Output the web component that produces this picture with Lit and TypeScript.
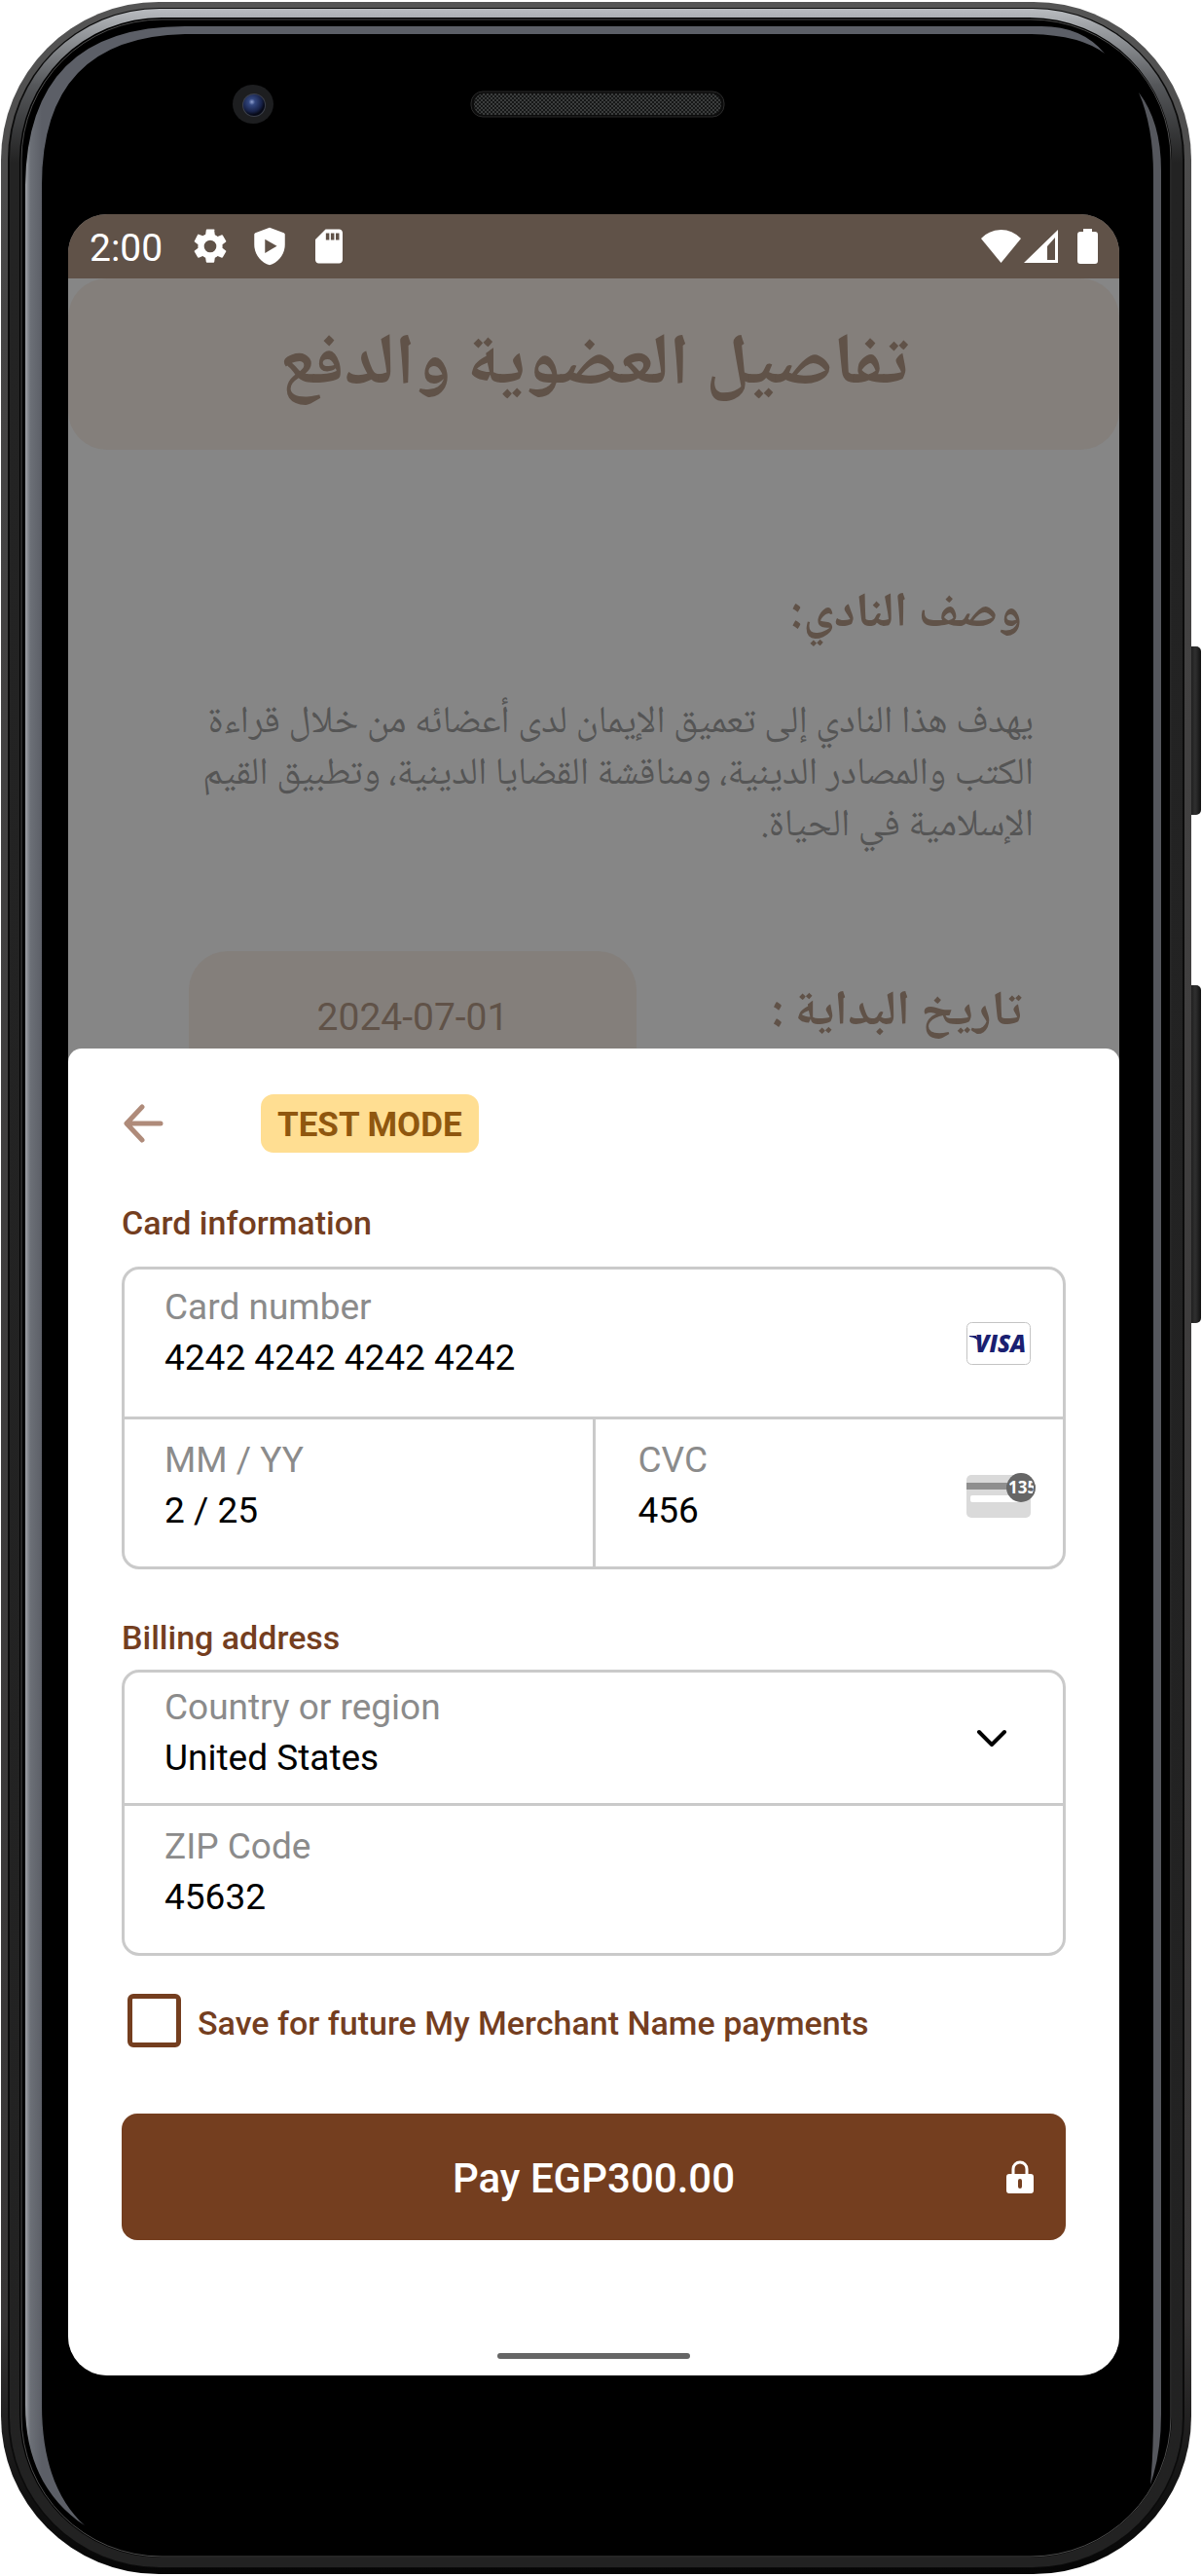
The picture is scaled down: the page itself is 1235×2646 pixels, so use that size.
import { LitElement, html, css, svg } from "lit";
import { customElement, property, state } from "lit/decorators.js";

/** Handset body: metal rim, glass edge highlights, camera, speaker and side keys. */
@customElement("device-frame")
class DeviceFrame extends LitElement {
  static styles = css`
    :host {
      display: block;
    }
    .art {
      display: block;
      width: 100%;
      height: 100%;
    }
  `;

  render() {
    return html`
      <svg class="art" viewBox="0 0 1235 2646" preserveAspectRatio="none" aria-hidden="true">
        <defs>
          <linearGradient id="rim" x1="0" y1="0" x2="0" y2="1">
            <stop offset="0" stop-color="#555555" />
            <stop offset="0.12" stop-color="#454444" />
            <stop offset="0.9" stop-color="#383636" />
            <stop offset="0.97" stop-color="#111111" />
            <stop offset="1" stop-color="#050505" />
          </linearGradient>
          <linearGradient id="metal" x1="0" y1="0" x2="0" y2="1">
            <stop offset="0" stop-color="#b9bcc0" />
            <stop offset="0.008" stop-color="#9b9ea2" />
            <stop offset="0.03" stop-color="#55575a" />
            <stop offset="0.06" stop-color="#232323" />
            <stop offset="1" stop-color="#222222" />
          </linearGradient>
          <linearGradient id="edge" gradientUnits="userSpaceOnUse" x1="26" y1="0" x2="43" y2="0">
            <stop offset="0" stop-color="#a0a3a8" />
            <stop offset="0.3" stop-color="#6c7077" />
            <stop offset="1" stop-color="#5c5f67" />
          </linearGradient>
          <linearGradient id="key" x1="0" y1="0" x2="1" y2="0">
            <stop offset="0" stop-color="#0a0a0a" />
            <stop offset="0.6" stop-color="#303030" />
            <stop offset="1" stop-color="#111111" />
          </linearGradient>
          <radialGradient id="lens" cx="0.4" cy="0.35" r="0.6">
            <stop offset="0" stop-color="#8fa0d0" />
            <stop offset="0.25" stop-color="#33477f" />
            <stop offset="0.75" stop-color="#18234a" />
            <stop offset="1" stop-color="#070a18" />
          </radialGradient>
          <pattern id="mesh" width="4" height="4" patternUnits="userSpaceOnUse">
            <rect width="4" height="4" fill="#161717" />
            <circle cx="1" cy="1" r="1" fill="#474949" />
            <circle cx="3" cy="3" r="1" fill="#474949" />
          </pattern>
        </defs>
        <rect x="1219" y="664" width="15" height="173" rx="5" fill="url(#key)" />
        <rect x="1219" y="1012" width="15" height="347" rx="5" fill="url(#key)" />
        <rect x="1" y="2" width="1223" height="2642" rx="162" fill="url(#rim)" />
        <rect x="8" y="8" width="1209" height="2630" rx="156" fill="#0b0b0b" />
        <rect x="10" y="9" width="1205" height="2628" rx="154" fill="url(#metal)" />
        <rect x="20" y="18" width="1184" height="2609" rx="146" fill="#000000" />
        <rect x="22" y="20" width="1181" height="2606" rx="144" fill="none" stroke="#4c4c4c" stroke-width="1" />
        <path
          fill="url(#edge)"
          d="M26 2470 V190 Q28 27 190 27 H1070 Q1112 27 1135 55 Q1110 36 1060 35 H190 Q43 38 43 190 V2470 C43 2530 60 2570 87 2594 C50 2570 26 2530 26 2470 Z"
        />
        <path fill="#55575d" d="M1170 95 Q1193 125 1193 175 V2480 Q1193 2520 1182 2552 Q1185 2520 1185 2480 V180 Q1185 130 1170 95 Z" />
        <ellipse cx="260" cy="107" rx="21" ry="20" fill="#1d1e20" />
        <ellipse cx="261" cy="108" rx="12" ry="12" fill="#3b3f4a" />
        <ellipse cx="261" cy="108" rx="11" ry="11" fill="url(#lens)" />
        <rect x="484" y="94" width="260" height="26" rx="12" fill="#0c0c0c" stroke="#2b2b2b" stroke-width="1" />
        <rect x="487" y="96" width="254" height="22" rx="10" fill="url(#mesh)" />
      </svg>
    `;
  }
}

const settingsIcon = svg`<path fill="currentColor" d="M19.14 12.94c.04-.3.06-.61.06-.94 0-.32-.02-.64-.07-.94l2.03-1.58a.49.49 0 0 0 .12-.61l-1.92-3.32a.49.49 0 0 0-.59-.22l-2.39.96c-.5-.38-1.03-.7-1.62-.94l-.36-2.54A.48.48 0 0 0 13.92 2h-3.84c-.24 0-.43.17-.47.41l-.36 2.54c-.59.24-1.13.57-1.62.94l-2.39-.96a.48.48 0 0 0-.59.22L2.74 8.87a.48.48 0 0 0 .12.61l2.03 1.58c-.05.3-.09.63-.09.94s.02.64.07.94l-2.03 1.58a.49.49 0 0 0-.12.61l1.92 3.32c.12.22.37.29.59.22l2.39-.96c.5.38 1.03.7 1.62.94l.36 2.54c.05.24.24.41.48.41h3.84c.24 0 .44-.17.47-.41l.36-2.54c.59-.24 1.13-.56 1.62-.94l2.39.96c.22.08.47 0 .59-.22l1.92-3.32a.48.48 0 0 0-.12-.61zM12 15.6a3.6 3.6 0 1 1 0-7.2 3.6 3.6 0 0 1 0 7.2z"/>`;
const protectIcon = svg`<path fill="currentColor" fill-rule="evenodd" d="M12 1 3.6 4.1Q3 4.4 3 5v6c0 5.5 3.8 10.700 9 12 5.200-1.300 9-6.500 9-12V5q0-.6-.6-.9zM9.300 7.800v8.200l7-4.200z"/>`;
const cardIcon = svg`<path fill="currentColor" fill-rule="evenodd" d="M18 2h-8L4 8v12c0 1.100.9 2 2 2h12c1.100 0 2-.9 2-2V4c0-1.100-.9-2-2-2zM10.200 4.300h2v4h-2zM13.100 4.300h2v4h-2zM16 4.300h2v4h-2z"/>`;

@customElement("status-bar")
class StatusBar extends LitElement {
  static styles = css`
    :host {
      display: flex;
      align-items: center;
      height: 66px;
      padding: 0 22px;
      background: #605248;
      color: #ffffff;
      font-family: Roboto, sans-serif;
    }
    .clock {
      font-size: 39px;
      line-height: 48px;
      margin-right: 28px;
      padding-top: 3px;
    }
    .left {
      display: flex;
      gap: 19px;
    }
    .right {
      display: flex;
      align-items: center;
      margin-left: auto;
    }
    .wifi {
      margin-right: 3px;
    }
    .signal {
      margin-right: 20px;
    }
  `;

  render() {
    return html`
      <span class="clock">2:00</span>
      <span class="left">
        ${[settingsIcon, protectIcon, cardIcon].map(
          (icon) => html`<svg width="42" height="42" viewBox="0 0 24 24" aria-hidden="true">${icon}</svg>`
        )}
      </span>
      <span class="right">
        <svg class="wifi" width="41" height="34" viewBox="0 0 41 34" aria-hidden="true">
          <path fill="currentColor" d="M0 9 Q9 0 20.500 0 T41 9 L20.500 34 Z" />
        </svg>
        <svg class="signal" width="35" height="34" viewBox="0 0 35 34" aria-hidden="true">
          <path fill="currentColor" fill-rule="evenodd" d="M35 0 V34 H0 Z M32 8 L24 17 V31 H32 Z" />
        </svg>
        <svg width="21" height="36" viewBox="0 0 21 36" aria-hidden="true">
          <path fill="currentColor" d="M6 0 H15 V3 H18 Q21 3 21 6 V33 Q21 36 18 36 H3 Q0 36 0 33 V6 Q0 3 3 3 H6 Z" />
        </svg>
      </span>
    `;
  }
}

/** Membership page that sits dimmed behind the payment sheet. */
@customElement("membership-page")
class MembershipPage extends LitElement {
  static styles = css`
    :host {
      display: block;
      color: #605248;
      font-family: "Noto Naskh Arabic", "Noto Sans Arabic", "DejaVu Sans", sans-serif;
    }
    .title {
      display: flex;
      align-items: center;
      justify-content: center;
      box-sizing: border-box;
      height: 176px;
      margin: 0;
      padding-top: 8px;
      border-radius: 40px;
      background: #847f7b;
      font-size: 74px;
      line-height: 80px;
      font-weight: 700;
    }
    .body {
      padding: 141px 100px 0 124px;
    }
    .heading {
      margin: 0;
      font-size: 50px;
      line-height: 60px;
      font-weight: 700;
    }
    .about .heading {
      margin: 0 0 54px;
    }
    .text {
      margin: 0 -12px 0 0;
      color: #555555;
      font-size: 39px;
      line-height: 53px;
      white-space: nowrap;
    }
    .start {
      display: flex;
      align-items: flex-start;
      justify-content: space-between;
      margin-top: 101px;
    }
    .start .heading {
      padding-top: 35px;
    }
    .date {
      width: 460px;
      height: 154px;
      box-sizing: border-box;
      border-radius: 40px;
      background: #847f7b;
      font-family: Roboto, sans-serif;
      font-size: 39px;
      line-height: 136px;
      text-align: center;
    }
  `;

  render() {
    return html`
      <div dir="rtl" lang="ar">
        <h1 class="title">تفاصيل العضوية والدفع</h1>
        <div class="body">
          <section class="about">
            <h2 class="heading">وصف النادي:</h2>
            <p class="text">
              يهدف هذا النادي إلى تعميق الإيمان لدى أعضائه من خلال قراءة<br />
              الكتب والمصادر الدينية، ومناقشة القضايا الدينية، وتطبيق القيم<br />
              الإسلامية في الحياة.
            </p>
          </section>
          <section class="start">
            <h2 class="heading">تاريخ البداية :</h2>
            <time class="date" dir="ltr" datetime="2024-07-01">2024-07-01</time>
          </section>
        </div>
      </div>
    `;
  }
}

@customElement("payment-sheet")
class PaymentSheet extends LitElement {
  @property() amount = "EGP300.00";
  @property() merchant = "My Merchant Name";
  @state() private save = false;

  static styles = css`
    :host {
      display: block;
      padding: 47px 55px 17px;
      border-radius: 14px 14px 0 0;
      background: #ffffff;
      color: #000000;
      font-family: Roboto, sans-serif;
    }
    .top {
      display: flex;
      align-items: center;
      gap: 100px;
      padding-left: 1px;
    }
    .back {
      display: flex;
      padding: 0;
      border: 0;
      background: none;
      color: #af8b7a;
    }
    .mode {
      padding: 10px 17px 6px;
      border-radius: 13px;
      background: #ffde92;
      color: #8f570f;
      font-size: 35px;
      line-height: 44px;
      font-weight: 700;
    }
    .legend {
      color: #743e1f;
      font-size: 34px;
      line-height: 44px;
      font-weight: 500;
    }
    .card {
      margin-top: 50px;
    }
    .billing {
      margin-top: 48px;
    }
    .box {
      display: grid;
      gap: 3px;
      border: 3px solid #cacaca;
      border-radius: 18px;
      background: #cacaca;
      overflow: hidden;
    }
    .card .box {
      grid-template-columns: 1fr 1fr;
      margin-top: 23px;
    }
    .billing .box {
      margin-top: 11px;
    }
    .cell {
      display: flex;
      align-items: center;
      box-sizing: border-box;
      min-width: 0;
      padding: 0 33px 0 41px;
      background: #ffffff;
    }
    .wide {
      grid-column: 1 / -1;
    }
    .code {
      padding-left: 44px;
      padding-right: 28px;
    }
    .country {
      padding-right: 57px;
    }
    .field {
      display: flex;
      flex: 1;
      flex-direction: column;
      min-width: 0;
      padding: 16px 0 31px;
    }
    .wide .field {
      padding: 13px 0 34px;
    }
    .country .field {
      padding: 10px 0 20px;
    }
    .label,
    .input {
      font-size: 37px;
      line-height: 52px;
    }
    .label {
      color: #8b8b8b;
    }
    .input {
      width: 100%;
      height: 52px;
      padding: 0;
      border: 0;
      outline: 0;
      appearance: none;
      background: none;
      color: #000000;
      font-family: inherit;
    }
    .save {
      display: flex;
      align-items: center;
      gap: 17px;
      height: 55px;
      margin: 39px 0 0 6px;
      color: #743e1f;
      font-size: 34px;
      line-height: 44px;
      font-weight: 500;
    }
    .note {
      padding-top: 4px;
    }
    .check {
      width: 55px;
      height: 55px;
      box-sizing: border-box;
      margin: 0;
      border: 5px solid #743e1f;
      border-radius: 6px;
      appearance: none;
      background: #ffffff;
    }
    .check:checked {
      background: #743e1f;
    }
    .pay {
      display: grid;
      grid-template-columns: 1fr auto 1fr;
      align-items: center;
      width: 100%;
      height: 130px;
      margin-top: 68px;
      padding: 0 33px;
      border: 0;
      border-radius: 16px;
      background: #743e1f;
      color: #ffffff;
      font-family: inherit;
      font-size: 42px;
      line-height: 52px;
      font-weight: 500;
    }
    .caption {
      grid-column: 2;
      padding-top: 4px;
    }
    .lock {
      justify-self: end;
    }
    .home {
      width: 198px;
      height: 6px;
      margin: 116px auto 0;
      border-radius: 3px;
      background: #666666;
    }
  `;

  render() {
    return html`
      <div class="top">
        <button class="back" type="button" aria-label="Back">
          <svg width="42" height="40" viewBox="0 0 42 40" aria-hidden="true">
            <path d="M39 20H5M20 3 4 20l16 17" fill="none" stroke="currentColor" stroke-width="5" stroke-linecap="round" stroke-linejoin="round" />
          </svg>
        </button>
        <span class="mode">TEST MODE</span>
      </div>

      <section class="card">
        <div class="legend">Card information</div>
        <div class="box">
          <div class="cell wide">
            <div class="field">
              <label class="label" for="number">Card number</label>
              <input class="input" id="number" inputmode="numeric" .value=${"4242 4242 4242 4242"} />
            </div>
            <svg width="66" height="44" viewBox="0 0 66 44" role="img" aria-label="Visa">
              <rect x="0.500" y="0.500" width="65" height="43" rx="5" fill="#ffffff" stroke="#c4c4c4" />
              <text x="35" y="31" text-anchor="middle" font-family="Open Sans, Noto Sans, sans-serif" font-size="24" font-weight="800" font-style="italic" fill="#1a1f71">VISA</text>
              <path d="M3 14h7l4 8q-3-6-11-7z" fill="#1a1f71" />
            </svg>
          </div>
          <div class="cell">
            <div class="field">
              <label class="label" for="expiry">MM / YY</label>
              <input class="input" id="expiry" inputmode="numeric" .value=${"2 / 25"} />
            </div>
          </div>
          <div class="cell code">
            <div class="field">
              <label class="label" for="cvc">CVC</label>
              <input class="input" id="cvc" inputmode="numeric" .value=${"456"} />
            </div>
            <svg width="71" height="50" viewBox="0 -6 71 50" aria-hidden="true">
              <clipPath id="disc"><circle cx="56" cy="13" r="13" /></clipPath>
              <rect width="66" height="44" rx="5" fill="#dadada" />
              <rect y="8" width="60" height="7" fill="#8f8f8f" />
              <rect x="4" y="21" width="50" height="7" rx="2" fill="#ffffff" />
              <circle cx="56" cy="13" r="15" fill="#666666" />
              <text x="43" y="19" clip-path="url(#disc)" font-family="Noto Sans, sans-serif" font-size="17" font-weight="700" fill="#ffffff">135</text>
            </svg>
          </div>
        </div>
      </section>

      <section class="billing">
        <div class="legend">Billing address</div>
        <div class="box">
          <div class="cell country">
            <div class="field">
              <label class="label" for="country">Country or region</label>
              <select class="input" id="country">
                <option>United States</option>
              </select>
            </div>
            <svg width="32" height="22" viewBox="0 -2 32 22" aria-hidden="true">
              <path d="M3 3l13 13L29 3" fill="none" stroke="#000000" stroke-width="4" stroke-linecap="round" stroke-linejoin="round" />
            </svg>
          </div>
          <div class="cell">
            <div class="field">
              <label class="label" for="zip">ZIP Code</label>
              <input class="input" id="zip" inputmode="numeric" .value=${"45632"} />
            </div>
          </div>
        </div>
      </section>

      <label class="save">
        <input
          class="check"
          type="checkbox"
          .checked=${this.save}
          @change=${(e: Event) => (this.save = (e.target as HTMLInputElement).checked)}
        />
        <span class="note">Save for future ${this.merchant} payments</span>
      </label>

      <button class="pay" type="button">
        <span class="caption">Pay ${this.amount}</span>
        <svg class="lock" width="28" height="34" viewBox="0 0 28 34" aria-hidden="true">
          <path d="M7 16V9a7 7 0 0 1 14 0v7" fill="none" stroke="#ffffff" stroke-width="3" />
          <path fill="#ffffff" fill-rule="evenodd" d="M3 14H25Q28 14 28 17V31Q28 34 25 34H3Q0 34 0 31V17Q0 14 3 14ZM14 19a2 2 0 0 0-2 2v6a2 2 0 0 0 4 0v-6a2 2 0 0 0-2-2Z" />
        </svg>
      </button>
      <div class="home"></div>
    `;
  }
}

@customElement("app-root")
class AppRoot extends LitElement {
  static styles = css`
    :host {
      display: block;
      background: #ffffff;
    }
    .phone {
      position: relative;
      padding: 220px 85px 206px 70px;
    }
    .frame {
      position: absolute;
      inset: 0;
    }
    .screen {
      position: relative;
      display: flex;
      flex-direction: column;
      border-radius: 40px;
      background: #868686;
      overflow: hidden;
    }
    .sheet {
      position: relative;
      margin-top: -54px;
    }
  `;

  render() {
    return html`
      <main class="phone">
        <device-frame class="frame"></device-frame>
        <div class="screen">
          <status-bar></status-bar>
          <membership-page></membership-page>
          <payment-sheet class="sheet"></payment-sheet>
        </div>
      </main>
    `;
  }
}
